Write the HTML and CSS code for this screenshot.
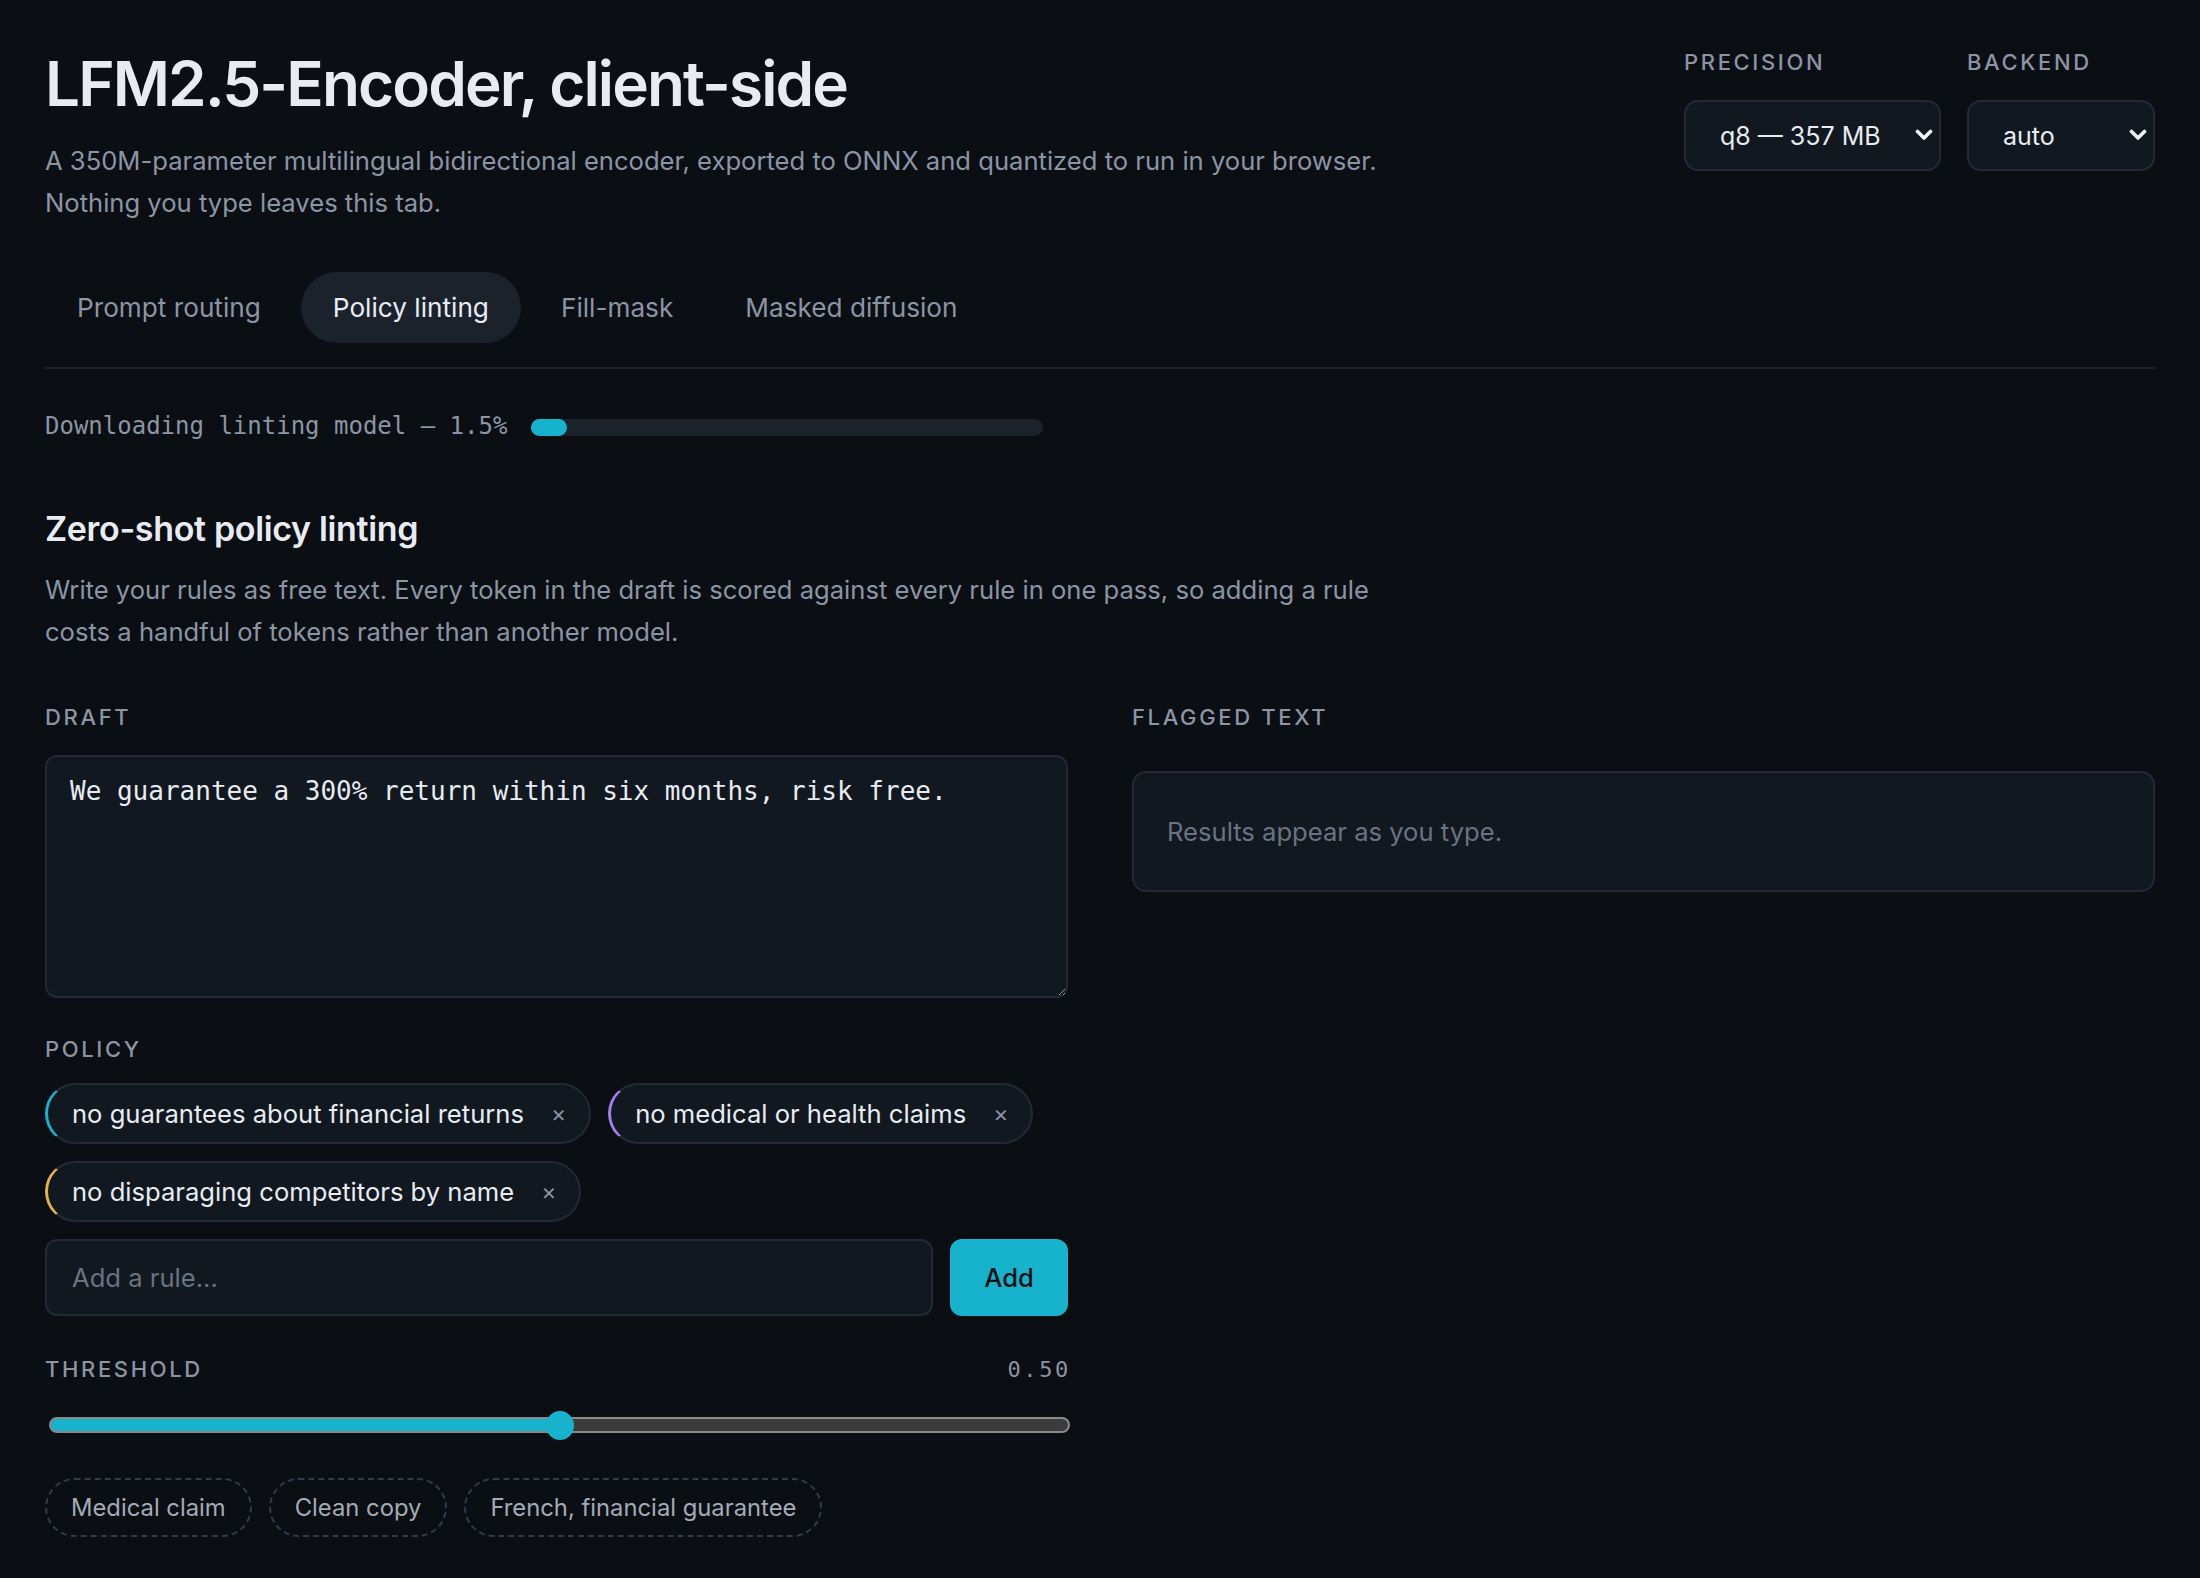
FILE: index.html
```html
<!DOCTYPE html>
<html lang="en">
<head>
  <meta charset="UTF-8" />
  <meta name="viewport" content="width=device-width, initial-scale=1.0"/>
  <title>LFM2.5-Encoder, client-side</title>
  <link rel="stylesheet" href="styles.css">
</head>
<body>
  <div class="page">
    <!-- HEADER -->
    <header class="top">
      <div class="intro">
        <h1>LFM2.5-Encoder, client-side</h1>
        <p class="lead">A 350M-parameter multilingual bidirectional encoder, exported to ONNX and quantized to run in your browser. Nothing you type leaves this tab.</p>
      </div>
      <div class="controls">
        <label class="control">
          <span class="label">Precision</span>
          <span class="select-wrap precision">
            <select><option>q8 — 357 MB</option><option>fp16 — 700 MB</option></select>
            <svg class="chevron" viewBox="0 0 18 12"><path d="M2.5 2.5 L9 9 L15.5 2.5" /></svg>
          </span>
        </label>
        <label class="control">
          <span class="label">Backend</span>
          <span class="select-wrap backend">
            <select><option>auto</option><option>webgpu</option><option>wasm</option></select>
            <svg class="chevron" viewBox="0 0 18 12"><path d="M2.5 2.5 L9 9 L15.5 2.5" /></svg>
          </span>
        </label>
      </div>
    </header>

    <!-- TABS -->
    <nav class="tabs">
      <a href="#" class="tab">Prompt routing</a>
      <a href="#" class="tab active">Policy linting</a>
      <a href="#" class="tab">Fill-mask</a>
      <a href="#" class="tab">Masked diffusion</a>
    </nav>

    <div class="status">
      <span>Downloading linting model — 1.5%</span>
      <div class="progress"><div class="progress-fill"></div></div>
    </div>

    <!-- POLICY LINTING -->
    <section class="panel">
      <h2>Zero-shot policy linting</h2>
      <p class="lead">Write your rules as free text. Every token in the draft is scored against every rule in one pass, so adding a rule costs a handful of tokens rather than another model.</p>

      <div class="grid">
        <div class="col">
          <div class="label">Draft</div>
          <textarea class="draft" spellcheck="false">We guarantee a 300% return within six months, risk free.</textarea>

          <div class="label policy-label">Policy</div>
          <div class="rules">
            <span class="rule cyan">no guarantees about financial returns <span class="remove">×</span></span>
            <span class="rule purple">no medical or health claims <span class="remove">×</span></span>
            <span class="rule amber">no disparaging competitors by name <span class="remove">×</span></span>
          </div>
          <div class="add-row">
            <input type="text" placeholder="Add a rule...">
            <button class="btn">Add</button>
          </div>

          <div class="threshold-head">
            <span class="label">Threshold</span>
            <span class="value">0.50</span>
          </div>
          <input type="range" class="slider" min="0" max="1" step="0.01" value="0.5">

          <div class="examples">
            <button class="example">Medical claim</button>
            <button class="example">Clean copy</button>
            <button class="example">French, financial guarantee</button>
          </div>
        </div>

        <div class="col">
          <div class="label">Flagged text</div>
          <div class="flagged">Results appear as you type.</div>
        </div>
      </div>
    </section>
  </div>
</body>
</html>
```

FILE: styles.css
```css
:root {
  --bg: #0b0e13;
  --surface: #111820;
  --surface-2: #1b222c;
  --border: #232a35;
  --text-primary: #e8ecf2;
  --text-secondary: #8b95a5;
  --text-muted: #6b7380;
  --accent: #17b3cc;
  --purple: #a47ff0;
  --amber: #e6b04e;
  --mono: 'DejaVu Sans Mono', 'Liberation Mono', monospace;
  color-scheme: dark;
}

body {
  background: var(--bg);
  color: var(--text-primary);
  font-family: Inter, 'Noto Sans', sans-serif;
  margin: 0;
}

.page {
  padding: 45px;
}

/* header */
.top {
  display: flex;
  justify-content: space-between;
  align-items: flex-start;
}

h1 {
  font-size: 62px;
  font-weight: 600;
  letter-spacing: -0.03em;
  line-height: 68px;
  margin: 5px 0 22px;
}

.lead {
  font-size: 25.6px;
  line-height: 42px;
  color: var(--text-secondary);
  max-width: 1350px;
  margin: 0;
}

.controls {
  display: flex;
  gap: 26px;
}

.control {
  display: flex;
  flex-direction: column;
  gap: 22px;
  padding-top: 2px;
}

.label {
  display: block;
  font-size: 22px;
  line-height: 31px;
  font-weight: 500;
  letter-spacing: 0.12em;
  text-transform: uppercase;
  color: var(--text-secondary);
}

.select-wrap {
  position: relative;
  display: block;
}

.select-wrap select {
  appearance: none;
  -webkit-appearance: none;
  width: 100%;
  height: 71px;
  padding: 0 34px;
  background: var(--surface);
  border: 2px solid var(--border);
  border-radius: 14px;
  color: var(--text-primary);
  font-family: inherit;
  font-size: 25px;
}

.precision { width: 257px; }
.backend { width: 188px; }

.chevron {
  position: absolute;
  right: 8px;
  top: 29px;
  width: 18px;
  height: 12px;
  fill: none;
  stroke: #f2f4f7;
  stroke-width: 3.6;
  stroke-linecap: round;
  stroke-linejoin: round;
  pointer-events: none;
}

/* tabs */
.tabs {
  display: flex;
  gap: 8px;
  margin-top: 48px;
  padding-bottom: 24px;
  border-bottom: 2px solid #1d242e;
}

.tab {
  padding: 0 32px;
  height: 71px;
  line-height: 71px;
  border-radius: 36px;
  font-size: 26.2px;
  color: var(--text-secondary);
  text-decoration: none;
}

.tab.active {
  background: var(--surface-2);
  color: var(--text-primary);
}

/* download status */
.status {
  display: flex;
  align-items: center;
  gap: 24px;
  margin-top: 42px;
  font-family: var(--mono);
  font-size: 24px;
  line-height: 30px;
  color: var(--text-secondary);
}

.progress {
  width: 512px;
  height: 17px;
  margin-top: 2px;
  border-radius: 9px;
  background: #1c222c;
}

.progress-fill {
  width: 36px;
  height: 100%;
  border-radius: 9px;
  background: var(--accent);
}

/* panel */
h2 {
  font-size: 34px;
  font-weight: 600;
  letter-spacing: -0.01em;
  line-height: 42px;
  margin: 67px 0 19px;
}

.grid {
  display: grid;
  grid-template-columns: 1fr 1fr;
  column-gap: 64px;
  margin-top: 49px;
}

.draft {
  display: block;
  box-sizing: border-box;
  width: 100%;
  height: 243px;
  margin-top: 22px;
  padding: 15px 23px;
  background: var(--surface);
  border: 2px solid var(--border);
  border-radius: 12px;
  color: var(--text-primary);
  font-family: var(--mono);
  font-size: 26px;
  line-height: 39px;
}

.policy-label {
  margin-top: 36px;
}

.rules {
  display: flex;
  flex-wrap: wrap;
  gap: 17px;
  margin-top: 18px;
}

.rule {
  display: inline-flex;
  align-items: center;
  gap: 27px;
  box-sizing: border-box;
  height: 61px;
  padding: 0 23px 0 24px;
  background: var(--surface);
  border: 2px solid var(--border);
  border-left: 3px solid var(--border);
  border-radius: 31px;
  font-size: 25.6px;
  color: var(--text-primary);
}

.rule.cyan { border-left-color: var(--accent); }
.rule.purple { border-left-color: var(--purple); }
.rule.amber { border-left-color: var(--amber); }

.remove {
  font-size: 23px;
  color: var(--text-secondary);
}

.add-row {
  display: flex;
  gap: 17px;
  margin-top: 17px;
  height: 77px;
}

.add-row input {
  flex: 1;
  padding: 0 25px;
  background: var(--surface);
  border: 2px solid var(--border);
  border-radius: 12px;
  color: var(--text-primary);
  font-family: inherit;
  font-size: 25.6px;
}

.add-row input::placeholder {
  color: var(--text-muted);
}

.btn {
  width: 118px;
  background: var(--accent);
  border: none;
  border-radius: 12px;
  color: #0b0f14;
  font-family: inherit;
  font-size: 25.6px;
  font-weight: 500;
  cursor: pointer;
}

.threshold-head {
  display: flex;
  justify-content: space-between;
  align-items: center;
  margin-top: 38px;
}

.value {
  font-family: var(--mono);
  font-size: 22px;
  letter-spacing: 0.12em;
  margin-right: -3px;
  color: var(--text-secondary);
}

/* range */
.slider {
  -webkit-appearance: none;
  appearance: none;
  display: block;
  width: calc(100% - 2px);
  height: 30px;
  margin: 25px 0 0 4px;
  background: transparent;
}

.slider::-webkit-slider-runnable-track {
  box-sizing: border-box;
  height: 16px;
  border: 2px solid #8a8a8a;
  border-radius: 8px;
  background: linear-gradient(to right, var(--accent) 50%, #3b3b3b 50%);
}

.slider::-webkit-slider-thumb {
  -webkit-appearance: none;
  width: 28px;
  height: 29px;
  margin-top: -8.5px;
  border-radius: 50%;
  background: var(--accent);
}

.examples {
  display: flex;
  gap: 17px;
  margin-top: 38px;
}

.example {
  height: 59px;
  margin: 0;
  padding: 0 24px;
  background: transparent;
  border: 2px dashed #343c49;
  border-radius: 30px;
  color: #a3abb7;
  font-family: inherit;
  font-size: 23.8px;
  cursor: pointer;
}

.flagged {
  box-sizing: border-box;
  height: 121px;
  margin-top: 38px;
  padding: 0 33px;
  display: flex;
  align-items: center;
  background: var(--surface);
  border: 2px solid var(--border);
  border-radius: 14px;
  font-size: 25.6px;
  color: var(--text-muted);
}
```
